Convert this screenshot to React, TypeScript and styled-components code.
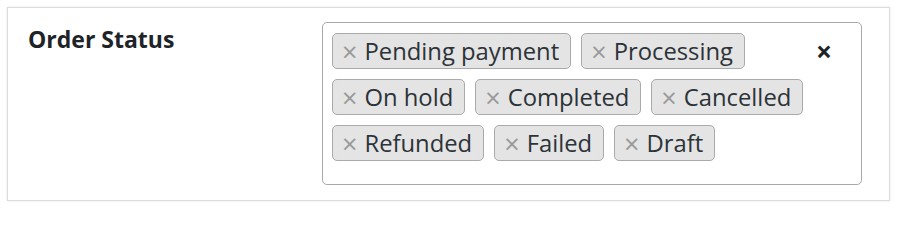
import React from "react";
import styled, { createGlobalStyle } from "styled-components";

const Global = createGlobalStyle`
  html, body { margin: 0; padding: 0; background: #ffffff; }
  body { font-family: "Segoe UI", "Open Sans", "Noto Sans", sans-serif; }
  * { box-sizing: border-box; }
`;

const Card = styled.div`
  margin: 7px;
  width: 883px;
  height: 194px;
  background: #ffffff;
  border: 1px solid #dcdcde;
  box-shadow: 0 0 2px rgba(0, 0, 0, 0.12);
  display: flex;
  align-items: flex-start;
  padding: 14px 0 0 20px;
`;

const Label = styled.div`
  width: 294px;
  flex: none;
  font-size: 23px;
  font-weight: 700;
  color: #1d2327;
  line-height: 30px;
  padding-top: 2px;
`;

const Select = styled.div`
  width: 540px;
  height: 163px;
  border: 1px solid #a7aaad;
  border-radius: 5px;
  display: flex;
  align-items: flex-start;
  padding: 10px 0 0 9px;
`;

const TagList = styled.ul`
  list-style: none;
  margin: 0;
  padding: 0;
  flex: 1;
  display: flex;
  flex-wrap: wrap;
  gap: 10px;
`;

const Tag = styled.li`
  height: 36px;
  display: inline-flex;
  align-items: center;
  background: #e4e4e4;
  border: 1px solid #aaaaaa;
  border-radius: 5px;
  padding: 0 11px 0 9px;
  font-size: 23.8px;
  color: #2c3338;
  white-space: nowrap;
`;

const Remove = styled.span`
  color: #999999;
  font-size: 27px;
  margin-right: 7px;
  line-height: 1;
`;

const Clear = styled.span`
  width: 28px;
  margin: 4px 23px 0 0;
  flex: none;
  text-align: center;
  font-size: 28px;
  font-weight: 700;
  line-height: 1;
  color: #1d2327;
`;

const statuses = [
  "Pending payment",
  "Processing",
  "On hold",
  "Completed",
  "Cancelled",
  "Refunded",
  "Failed",
  "Draft",
];

export default function App() {
  return (
    <>
      <Global />
      <Card>
        <Label>Order Status</Label>
        <Select>
          <TagList>
            {statuses.map((s) => (
              <Tag key={s}>
                <Remove>×</Remove>
                {s}
              </Tag>
            ))}
          </TagList>
          <Clear>×</Clear>
        </Select>
      </Card>
    </>
  );
}
